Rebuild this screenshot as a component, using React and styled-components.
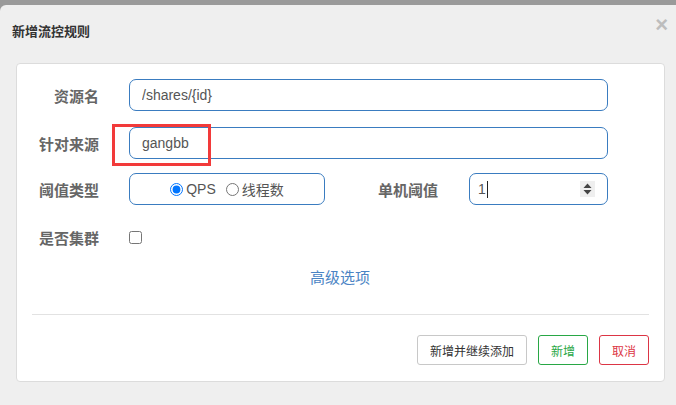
import React from "react";
import styled, { createGlobalStyle } from "styled-components";

const GlobalStyle = createGlobalStyle`
	html, body {
		margin: 0;
		padding: 0;
		background: #9a9a9a;
		font-family: "Liberation Sans", "Noto Sans CJK SC", sans-serif;
		overflow: hidden;
	}
`;

function Spinner() {
	return (
		<StyledSpinner>
			<svg width="9" height="12" viewBox="0 0 9 12">
				<path d="M4.5 0.5 L8.5 5 L0.5 5 Z" fill="#444" />
				<path d="M0.5 7 L8.5 7 L4.5 11.5 Z" fill="#444" />
			</svg>
		</StyledSpinner>
	);
}

function App() {
	return (
		<>
			<GlobalStyle />
			<StyledDialog>
				<StyledClose>×</StyledClose>
				<StyledTitle>新增流控规则</StyledTitle>
				<StyledCard>
					<StyledForm>
						<StyledRow>
							<StyledLabel>资源名</StyledLabel>
							<StyledInput type="text" defaultValue="/shares/{id}" />
						</StyledRow>
						<StyledRow>
							<StyledLabel>针对来源</StyledLabel>
							<StyledField>
								<StyledInput type="text" defaultValue="gangbb" />
								<StyledMark />
							</StyledField>
						</StyledRow>
						<StyledRow $lift={2}>
							<StyledLabel>阈值类型</StyledLabel>
							<StyledSplit>
								<StyledRadioBox>
									<StyledOption>
										<StyledRadio type="radio" name="grade" defaultChecked />
										QPS
									</StyledOption>
									<StyledOption>
										<StyledRadio type="radio" name="grade" />
										线程数
									</StyledOption>
								</StyledRadioBox>
								<StyledLabel>单机阈值</StyledLabel>
								<StyledNumberBox>
									<StyledValue>1</StyledValue>
									<StyledCaret />
									<Spinner />
								</StyledNumberBox>
							</StyledSplit>
						</StyledRow>
						<StyledRow>
							<StyledLabel>是否集群</StyledLabel>
							<StyledCheckWrap>
								<StyledCheckbox type="checkbox" />
							</StyledCheckWrap>
						</StyledRow>
					</StyledForm>
					<StyledLink>高级选项</StyledLink>
					<StyledRule />
					<StyledFooter>
						<StyledButton>新增并继续添加</StyledButton>
						<StyledButton $tone="#28a745">新增</StyledButton>
						<StyledButton $tone="#dc3545">取消</StyledButton>
					</StyledFooter>
				</StyledCard>
			</StyledDialog>
		</>
	);
}

export default App;

export const StyledDialog = styled.div`
	position: relative;
	margin-top: 5px;
	height: 400px;
	background: #efefef;
	border-top-left-radius: 6px;
	padding: 16px 0 0 0;
	box-sizing: border-box;
`;

export const StyledClose = styled.span`
	position: absolute;
	top: 6px;
	right: 8px;
	font-size: 22px;
	font-weight: bold;
	line-height: 28px;
	color: #bdbdbd;
	font-family: "Liberation Sans", sans-serif;
`;

export const StyledTitle = styled.h4`
	margin: 0 0 22px 12px;
	font-family: "Noto Sans CJK SC", sans-serif;
	font-size: 13px;
	line-height: 20px;
	font-weight: bold;
	color: #333;
`;

export const StyledCard = styled.div`
	margin-left: 16px;
	width: 649px;
	box-sizing: border-box;
	background: #fff;
	border: 1px solid #dcdcdc;
	border-radius: 4px;
	padding: 15px 15px 16px 14px;
`;

export const StyledForm = styled.div`
	display: flex;
	flex-direction: column;
	gap: 16px;
	padding-right: 41px;
`;

export const StyledRow = styled.div`
	display: grid;
	grid-template-columns: 68px 1fr;
	column-gap: 30px;
	align-items: center;
	height: 32px;
	margin-top: ${(p) => (p.$lift ? `-${p.$lift}px` : "0")};
`;

export const StyledLabel = styled.label`
	text-align: right;
	font-family: "Noto Sans CJK SC", sans-serif;
	font-size: 15px;
	font-weight: bold;
	color: #666;
	white-space: nowrap;
`;

export const StyledField = styled.div`
	position: relative;
	display: flex;
`;

export const StyledInput = styled.input`
	box-sizing: border-box;
	width: 100%;
	height: 32px;
	padding: 0 12px;
	border: 1px solid #3a7cc0;
	border-radius: 7px;
	font-family: "Liberation Sans", "Noto Sans CJK SC", sans-serif;
	font-size: 14px;
	color: #555;
	background: #fff;
	outline: none;
`;

export const StyledMark = styled.div`
	position: absolute;
	left: -17px;
	top: -3px;
	width: 99px;
	height: 42px;
	box-sizing: border-box;
	border: 3px solid #f23a3a;
	pointer-events: none;
`;

export const StyledSplit = styled.div`
	display: grid;
	grid-template-columns: 196px 1fr 139px;
	column-gap: 31px;
	align-items: center;
`;

export const StyledRadioBox = styled.div`
	box-sizing: border-box;
	height: 32px;
	border: 1px solid #3a7cc0;
	border-radius: 7px;
	display: flex;
	align-items: center;
	justify-content: center;
	gap: 10px;
`;

export const StyledOption = styled.label`
	display: flex;
	align-items: center;
	gap: 3px;
	font-family: "Liberation Sans", "Noto Sans CJK SC", sans-serif;
	font-size: 14px;
	color: #555;
`;

export const StyledRadio = styled.input`
	margin: 0;
	width: 13px;
	height: 13px;
`;

export const StyledNumberBox = styled.div`
	box-sizing: border-box;
	height: 32px;
	border: 1px solid #3a7cc0;
	border-radius: 7px;
	display: flex;
	align-items: center;
	padding: 0 12px 0 8px;
	background: #fff;
`;

export const StyledValue = styled.span`
	font-family: "Liberation Sans", sans-serif;
	font-size: 14px;
	color: #555;
`;

export const StyledCaret = styled.span`
	width: 1px;
	height: 17px;
	margin-left: 1px;
	background: #222;
	margin-right: auto;
`;

export const StyledSpinner = styled.span`
	display: flex;
	align-items: center;
	justify-content: center;
	width: 15px;
	height: 16px;
	background: #efefef;
`;

export const StyledCheckWrap = styled.div`
	display: flex;
	align-items: center;
`;

export const StyledCheckbox = styled.input`
	margin: 0;
	width: 13px;
	height: 13px;
`;

export const StyledLink = styled.div`
	margin-top: 14px;
	text-align: center;
	font-family: "Noto Sans CJK SC", sans-serif;
	font-size: 15px;
	line-height: 20px;
	color: #4a84c4;
`;

export const StyledRule = styled.hr`
	margin: 27px 0 0 1px;
	border: 0;
	border-top: 1px solid #e2e2e2;
`;

export const StyledFooter = styled.div`
	display: flex;
	justify-content: flex-end;
	gap: 11px;
	margin-top: 20px;
`;

export const StyledButton = styled.button`
	box-sizing: border-box;
	height: 30px;
	padding: 0 12px;
	background: #fff;
	border: 1px solid ${(p) => p.$tone || "#c8c8c8"};
	border-radius: 3px;
	color: ${(p) => p.$tone || "#333"};
	font-family: "Noto Sans CJK SC", sans-serif;
	font-size: 12px;
	cursor: pointer;
`;
